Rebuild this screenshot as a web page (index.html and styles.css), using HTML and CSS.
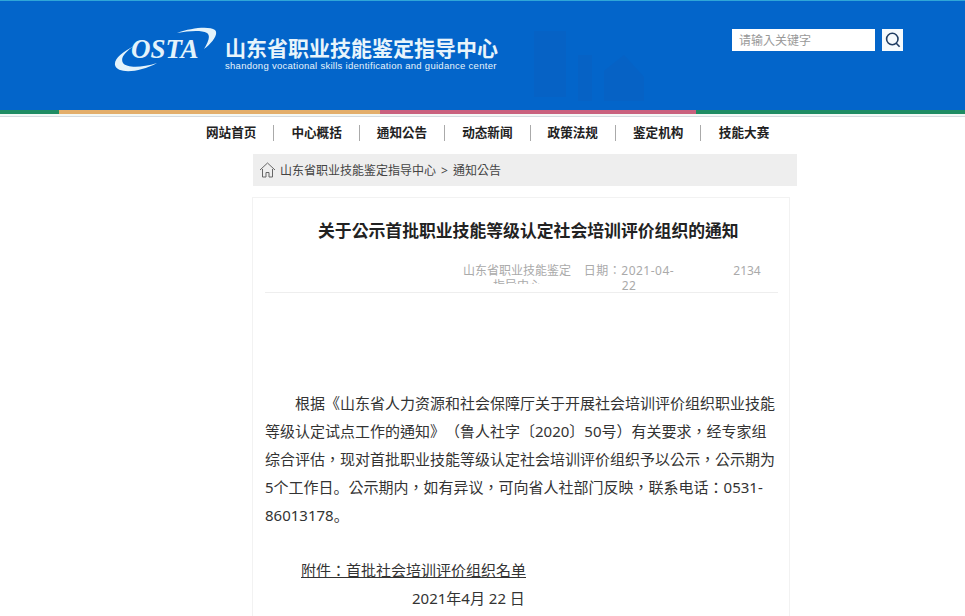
FILE: index.html
```html
<!DOCTYPE html>
<html>
  <head>
    <meta charset="utf-8" />
    <title>关于公示首批职业技能等级认定社会培训评价组织的通知</title>
    <link rel="stylesheet" href="styles.css">
  </head>
  <body>
    <header class="top">
      <svg class="logo" width="106" height="46" viewBox="0 0 106 46">
        <path d="M64 6 C78 1 96 -1 102 3 C106 7 99 16 91 22 C95 15 98 9 94 6 C88 3 76 4 64 6 Z" fill="#e4f3fb" />
        <path d="M21 19 C9 25 1 32 2 38 C4 47 26 46 44 36 C28 41 14 41 10 36 C7 31 12 25 21 19 Z" fill="#e4f3fb" />
        <text class="logo-text" x="18" y="31">OSTA</text>
      </svg>
      <div class="brand">
        <div class="brand-name">山东省职业技能鉴定指导中心</div>
        <div class="brand-en">shandong vocational skills identification and guidance center</div>
      </div>
      <svg class="watermark" width="130" height="80" viewBox="0 0 130 80">
        <path d="M14 6 H46 V72 H14 Z M58 30 H72 V76 H58 Z M84 46 L104 30 L124 52 V76 H84 Z" fill="#0a60c2" />
      </svg>
      <form class="search">
        <input class="search-input" type="text" placeholder="请输入关键字" />
        <button class="search-btn" type="button">
          <svg width="16" height="16" viewBox="0 0 16 16" fill="none" stroke="#1f3d63" stroke-width="1.6">
            <circle cx="7.3" cy="7" r="5.7" />
            <path d="M11 11 L14.6 14.8" />
          </svg>
        </button>
      </form>
    </header>
    <div class="stripes">
      <span class="stripe-green stripe-left"></span>
      <span class="stripe-orange"></span>
      <span class="stripe-pink"></span>
      <span class="stripe-green stripe-right"></span>
    </div>

    <nav class="nav">
      <a href="#">网站首页</a>
      <a href="#">中心概括</a>
      <a href="#">通知公告</a>
      <a href="#">动态新闻</a>
      <a href="#">政策法规</a>
      <a href="#">鉴定机构</a>
      <a href="#">技能大赛</a>
    </nav>

    <div class="crumb">
      <svg width="17" height="16" viewBox="0 0 17 16" fill="none" stroke="#666" stroke-width="1">
        <path d="M1 8 L8.5 1 L16 8" />
        <path d="M3.5 7 V15 H7 V10.5 H10 V15 H13.5 V7" />
      </svg>
      <span>山东省职业技能鉴定指导中心<span class="crumb-sep">&gt;</span>通知公告</span>
    </div>

    <main class="card">
      <h1 class="title">关于公示首批职业技能等级认定社会培训评价组织的通知</h1>
      <div class="meta">
        <div class="meta-source">山东省职业技能鉴定指导中心</div>
        <div class="meta-date">日期：2021-04-22</div>
        <div class="meta-views">2134</div>
      </div>
      <div class="content">
        <p class="para">根据《山东省人力资源和社会保障厅关于开展社会培训评价组织职业技能等级认定试点工作的通知》（鲁人社字〔2020〕50号）有关要求，经专家组综合评估，现对首批职业技能等级认定社会培训评价组织予以公示，公示期为5个工作日<span class="stop">。</span>公示期内，如有异议，可向省人社部门反映，联系电话：0531-86013178<span class="stop">。</span></p>
        <p class="attach"><a href="#">附件：首批社会培训评价组织名单</a></p>
        <p class="sign">2021年4月 22 日</p>
      </div>
    </main>
  </body>
</html>
```

FILE: styles.css
```css
html,
body {
  height: 616px;
  overflow: hidden;
}

body {
  margin: 0;
  font-family: "Noto Sans", "Noto Sans CJK TC", "Liberation Sans", sans-serif;
  background-color: #fff;
  color: #333;
  text-spacing-trim: space-all;
}

.top {
  display: flex;
  align-items: flex-start;
  height: 110px;
  padding-left: 113px;
  box-sizing: border-box;
  background-color: #0365ca;
  border-top: 1px solid #2fa6d8;
  position: relative;
}

.logo {
  margin-top: 26px;
  flex: none;
}

.logo-text {
  font-family: "Liberation Serif", serif;
  font-size: 27px;
  font-weight: bold;
  font-style: italic;
  fill: #e4f3fb;
}

.brand {
  margin-top: 34px;
  margin-left: 6px;
  width: 272px;
  color: #e8f4fb;
}

.brand-name {
  font-size: 21px;
  font-weight: bold;
  line-height: 26px;
  white-space: nowrap;
}

.brand-en {
  font-family: "Liberation Sans", sans-serif;
  font-size: 9.5px;
  line-height: 10px;
  letter-spacing: 0.28px;
  white-space: nowrap;
}

.watermark {
  position: absolute;
  left: 520px;
  top: 24px;
  opacity: 0.5;
}

.search {
  display: flex;
  gap: 7px;
  margin-left: auto;
  margin-right: 62px;
  margin-top: 28px;
}

.search-input {
  width: 143px;
  height: 22px;
  box-sizing: border-box;
  border: none;
  padding: 0 7px;
  font-family: inherit;
  font-size: 12px;
  background-color: #fff;
}

.search-input::placeholder {
  color: #999;
}

.search-btn {
  display: flex;
  align-items: center;
  justify-content: center;
  width: 21px;
  height: 22px;
  padding: 0;
  border: none;
  background-color: #f5fafd;
}

.stripes {
  display: flex;
  height: 6px;
  border-bottom: 1px solid #d5dbe0;
}

.stripes span {
  display: block;
  height: 4px;
  border-bottom: 2px solid #f3f8f6;
}

.stripe-left {
  width: 59px;
}

.stripe-right {
  flex: 1;
}

.stripe-green {
  background-color: #1e8c63;
}

.stripe-orange {
  width: 321px;
  background-color: #e3ae6b;
}

.stripe-pink {
  width: 316px;
  background-color: #c9617e;
}

.nav {
  display: flex;
  margin-left: 189px;
  margin-top: 8px;
  height: 18px;
}

.nav a {
  width: 85.4px;
  height: 16px;
  box-sizing: border-box;
  text-align: center;
  font-size: 12.6px;
  font-weight: bold;
  line-height: 16px;
  color: #222;
  text-decoration: none;
  border-right: 1px solid #aaa;
}

.nav a:last-child {
  border-right: none;
}

.crumb {
  display: flex;
  align-items: center;
  gap: 4px;
  width: 544px;
  height: 32px;
  margin-left: 253px;
  margin-top: 11px;
  padding-left: 6px;
  padding-bottom: 1px;
  box-sizing: border-box;
  background-color: #eee;
  font-size: 12px;
  color: #444;
}

.crumb-sep {
  margin: 0 5px;
}

.card {
  width: 538px;
  height: 419px;
  margin-left: 252px;
  margin-top: 11px;
  padding: 0 11px 0 12px;
  box-sizing: border-box;
  border: 1px solid #f2f2f2;
  border-bottom: none;
}

.title {
  margin: 21px 0 0;
  padding-left: 53px;
  font-size: 16.84px;
  font-weight: bold;
  line-height: 24px;
  color: #222;
  white-space: nowrap;
}

.meta {
  display: flex;
  height: 29px;
  margin-top: 20px;
  padding-left: 196px;
  border-bottom: 1px solid #eee;
  font-size: 12px;
  line-height: 15px;
  color: #aaa;
  text-align: center;
}

.meta-source {
  width: 112px;
  height: 21px;
  overflow: hidden;
}

.meta-date {
  width: 100px;
  margin-left: 6px;
  letter-spacing: 0.5px;
}

.meta-views {
  width: 60px;
  margin-left: 38px;
}

.content {
  font-size: 15px;
  line-height: 28px;
  color: #333;
}

.content p {
  margin: 0;
}

.para {
  width: 510px;
  margin-left: 2px;
  margin-top: 96px !important;
  text-indent: 2em;
}

.stop {
  font-family: "Noto Sans CJK SC", sans-serif;
}

.attach {
  margin-top: 28px !important;
  padding-left: 36px;
  line-height: 27px;
}

.attach a {
  color: #333;
}

.sign {
  padding-left: 147px;
}
```
